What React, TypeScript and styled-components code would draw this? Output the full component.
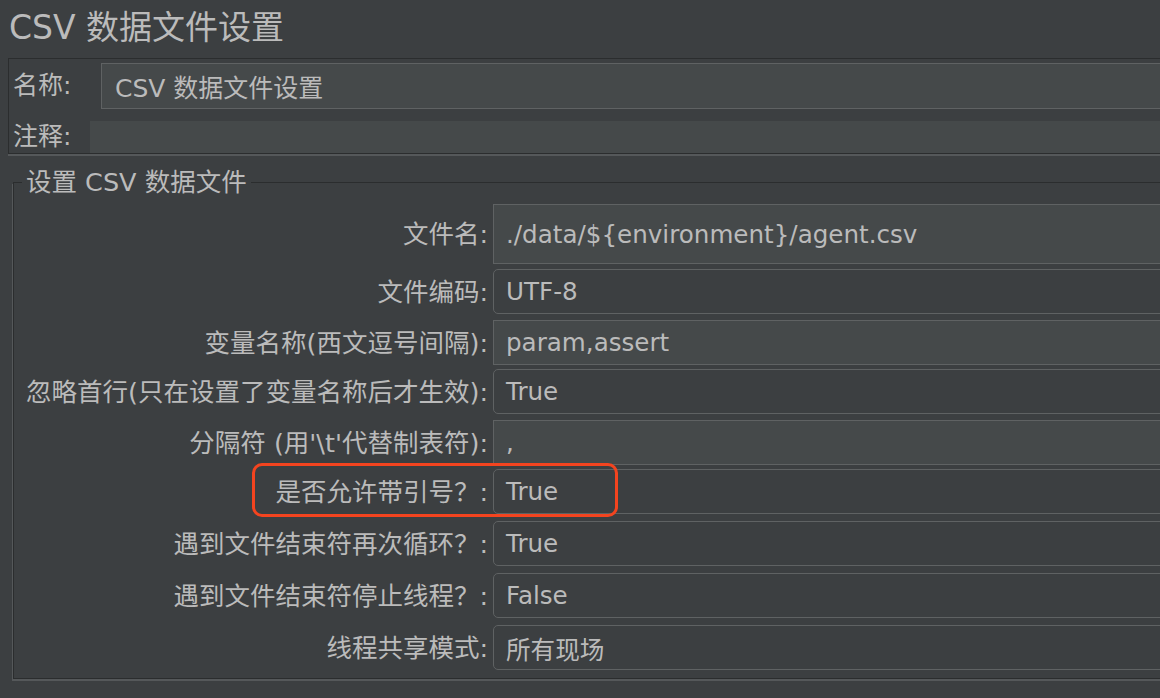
import styled, { createGlobalStyle } from 'styled-components';

const GlobalStyle = createGlobalStyle`
  * { box-sizing: border-box; }
  html, body {
    margin: 0;
    padding: 0;
    background: #3c3f41;
    overflow: hidden;
  }
  body {
    font-family: "DejaVu Sans", "Noto Sans CJK SC", sans-serif;
    color: #bbbbbb;
  }
`;

const Page = styled.div`
  width: 1200px;
  height: 698px;
  background: #3c3f41;
`;

const Title = styled.h1`
  margin: 0;
  height: 58px;
  padding-left: 9px;
  font-size: 33px;
  font-weight: 400;
  line-height: 56px;
  color: #bbbbbb;
  white-space: nowrap;
`;

const NamePanel = styled.div`
  display: flex;
  flex-direction: column;
  gap: 12px;
  margin-left: 8px;
  padding: 4px 0 0 4px;
  border: 1px solid #2b2d2e;
  box-shadow: 0 2px 0 #55585a;
`;

const NameRow = styled.div`
  display: flex;
  align-items: center;
`;

const NameLabel = styled.span<{ $w: number }>`
  flex: none;
  width: ${(p) => p.$w}px;
  font-size: 25px;
  line-height: 30px;
  white-space: nowrap;
`;

const NameInput = styled.div`
  flex: 1;
  height: 46px;
  display: flex;
  align-items: center;
  padding-left: 13px;
  background: #45494a;
  border: 1px solid #5f6263;
  font-size: 25px;
  white-space: nowrap;
`;

const CommentInput = styled.div`
  flex: 1;
  height: 32px;
  background: #45494a;
`;

const Group = styled.fieldset`
  margin: 14px 0 0 13px;
  padding: 8px 0 8px 0;
  min-width: 0;
  border: 1px solid #2b2d2e;
  box-shadow: -1px 2px 0 #55585a;
`;

const Legend = styled.legend`
  margin-left: 8px;
  padding: 0 4px;
  font-size: 25.5px;
  line-height: 28px;
  color: #bbbbbb;
  white-space: nowrap;
`;

const FormRow = styled.div<{ $gap: number }>`
  position: relative;
  display: flex;
  align-items: center;
  margin-bottom: ${(p) => p.$gap}px;
`;

const RowLabel = styled.span`
  flex: none;
  width: 479px;
  padding-right: 5px;
  text-align: right;
  font-size: 25.5px;
  line-height: 30px;
  white-space: nowrap;
`;

const Field = styled.div<{ $combo?: boolean; $h: number }>`
  flex: 1;
  height: ${(p) => p.$h}px;
  display: flex;
  align-items: center;
  padding-left: 12px;
  border: 1px solid #5f6263;
  border-radius: ${(p) => (p.$combo ? '5px' : '0')};
  background: ${(p) => (p.$combo ? '#3c3f41' : '#45494a')};
  font-size: 24.6px;
  white-space: nowrap;
`;

const Mark = styled.div`
  position: absolute;
  left: 238px;
  top: -6px;
  width: 366px;
  height: 54px;
  border: 3px solid #f4441f;
  border-radius: 10px;
  pointer-events: none;
`;

type Row = {
  label: string;
  value: string;
  combo: boolean;
  h: number;
  gap: number;
  marked?: boolean;
};

const rows: Row[] = [
  { label: '文件名:', value: './data/${environment}/agent.csv', combo: false, h: 60, gap: 5 },
  { label: '文件编码:', value: 'UTF-8', combo: true, h: 45, gap: 6 },
  { label: '变量名称(西文逗号间隔):', value: 'param,assert', combo: false, h: 45, gap: 4 },
  { label: '忽略首行(只在设置了变量名称后才生效):', value: 'True', combo: true, h: 45, gap: 6 },
  { label: "分隔符 (用'\\t'代替制表符):", value: ',', combo: false, h: 45, gap: 4 },
  { label: '是否允许带引号？:', value: 'True', combo: true, h: 45, gap: 7, marked: true },
  { label: '遇到文件结束符再次循环？:', value: 'True', combo: true, h: 45, gap: 7 },
  { label: '遇到文件结束符停止线程？:', value: 'False', combo: true, h: 45, gap: 7 },
  { label: '线程共享模式:', value: '所有现场', combo: true, h: 45, gap: 0 },
];

function App() {
  return (
    <>
      <GlobalStyle />
      <Page>
        <Title>CSV 数据文件设置</Title>
        <NamePanel>
          <NameRow>
            <NameLabel $w={88}>名称:</NameLabel>
            <NameInput>CSV 数据文件设置</NameInput>
          </NameRow>
          <NameRow>
            <NameLabel $w={77}>注释:</NameLabel>
            <CommentInput />
          </NameRow>
        </NamePanel>

        <Group>
          <Legend>设置 CSV 数据文件</Legend>
          {rows.map((r) => (
            <FormRow key={r.label} $gap={r.gap}>
              <RowLabel>{r.label}</RowLabel>
              <Field $combo={r.combo} $h={r.h}>
                {r.value}
              </Field>
              {r.marked && <Mark />}
            </FormRow>
          ))}
        </Group>
      </Page>
    </>
  );
}

export default App;
